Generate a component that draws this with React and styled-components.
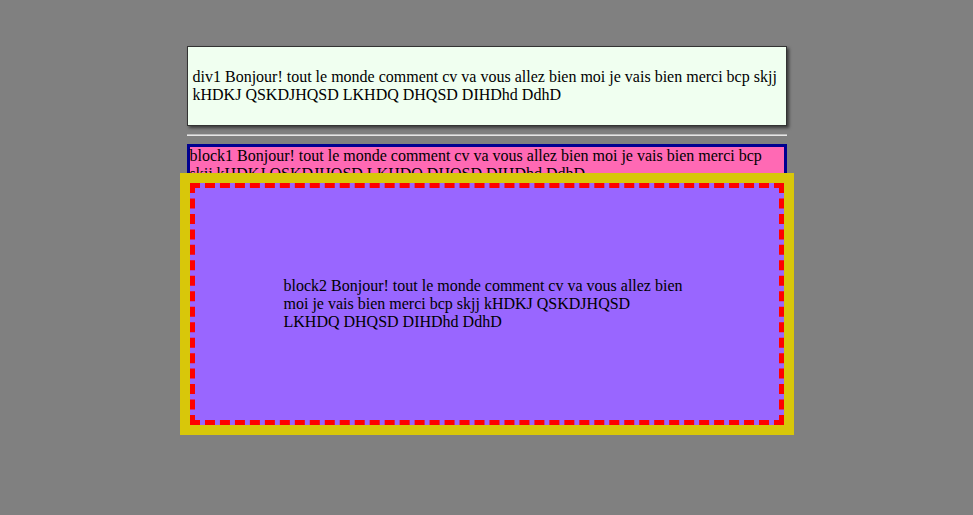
import React from 'react'
import styled, { createGlobalStyle } from 'styled-components';

const GlobalStyle = createGlobalStyle`
  html, body {
    margin: 0;
    background: #808080;
  }
  body {
    font-family: "Liberation Serif", "Times New Roman", serif;
    font-size: 16px;
    color: #000;
  }
`

const Page = styled.div`
  padding-top: 46px;
`

const Div1 = styled.div`
  box-sizing: border-box;
  width: 600px;
  margin: 0 auto;
  padding: 5px;
  background: #f0fff0;
  border: 1px solid #333;
  box-shadow: 2px 2px 3px #3a3a3a;
`

const Para = styled.p`
  margin: 16px 0;
  line-height: 18px;
`

const Rule = styled.hr`
  width: 600px;
  margin: 8px auto;
  border: none;
  border-top: 1px solid #bdbdbd;
  border-bottom: 1px solid #e6e6e6;
`

const Block1 = styled.div`
  box-sizing: border-box;
  width: 600px;
  margin: 0 auto;
  background: #ff69b4;
  border: 3px solid #000090;
  line-height: 18px;
`

const Frame = styled.div`
  position: relative;
  box-sizing: border-box;
  width: 614px;
  margin: -13px auto 0;
  border: 10px solid #d8c70a;
`

const Block2 = styled.div`
  padding: 89px;
  background: #9966ff;
  border: 5px dashed #ff0000;
  line-height: 18px;
`

const App = () => {
  const text = 'Bonjour! tout le monde comment cv va vous allez bien moi je vais bien merci bcp skjj kHDKJ QSKDJHQSD LKHDQ DHQSD DIHDhd DdhD'
  return (
    <Page>
      <GlobalStyle />
      <Div1>
        <Para>div1 {text}</Para>
      </Div1>
      <Rule />
      <Block1>block1 {text}</Block1>
      <Frame>
        <Block2>block2 {text}</Block2>
      </Frame>
    </Page>
  )
}

export default App;
